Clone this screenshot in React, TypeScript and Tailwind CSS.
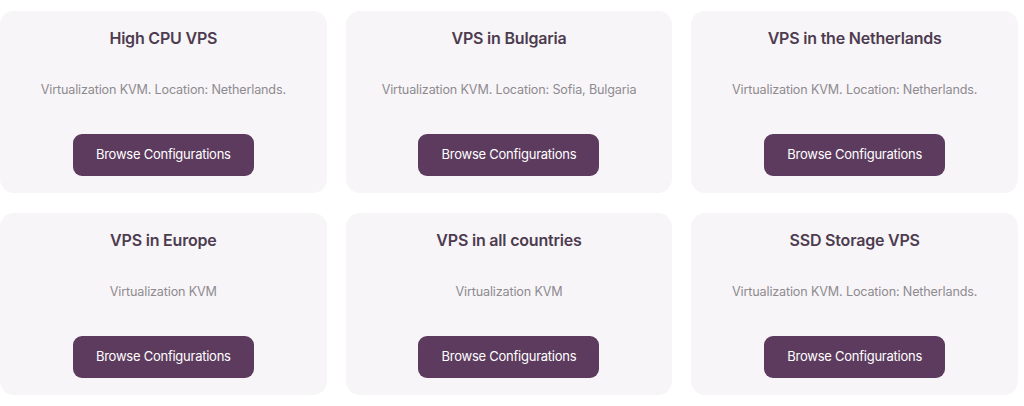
const plans = [
  { title: 'High CPU VPS', desc: 'Virtualization KVM. Location: Netherlands.' },
  { title: 'VPS in Bulgaria', desc: 'Virtualization KVM. Location: Sofia, Bulgaria' },
  { title: 'VPS in the Netherlands', desc: 'Virtualization KVM. Location: Netherlands.' },
  { title: 'VPS in Europe', desc: 'Virtualization KVM' },
  { title: 'VPS in all countries', desc: 'Virtualization KVM' },
  { title: 'SSD Storage VPS', desc: 'Virtualization KVM. Location: Netherlands.' },
];

const App = () => {
  return (
    <div className="w-[1024px] h-[406px] bg-white pt-[11px] font-['Inter',sans-serif]">
      <div className="grid grid-cols-3 gap-x-[19px] gap-y-[20px] w-[1018px]">
        {plans.map((plan) => (
          <div
            key={plan.title}
            className="bg-[#f8f5f8] rounded-[14px] h-[182px] flex flex-col items-center pt-[16px]"
          >
            <h3 className="text-[16px] leading-[22px] font-semibold text-[#4d3c50] tracking-[-0.2px]">
              {plan.title}
            </h3>
            <p className="mt-[32px] text-[12.6px] leading-[18px] text-[#8e8b90] tracking-[-0.15px]">
              {plan.desc}
            </p>
            <button className="mt-[35px] w-[181px] h-[42px] rounded-[9px] bg-[#5d3b5e] text-white text-[13px] tracking-[-0.25px]">
              Browse Configurations
            </button>
          </div>
        ))}
      </div>
    </div>
  );
};

export default App;
